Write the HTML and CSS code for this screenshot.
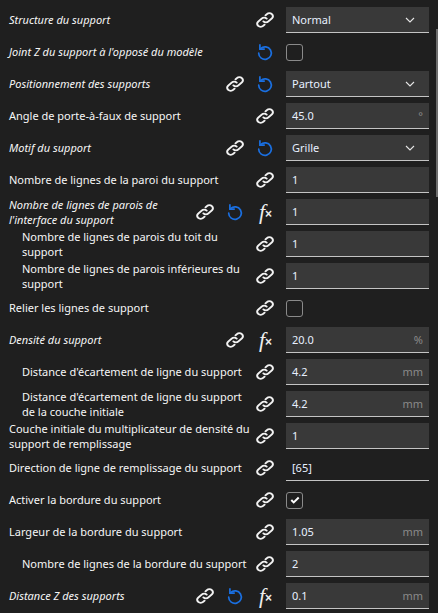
FILE: index.html
```html
<!DOCTYPE html>
<html lang="fr">
<head>
<meta charset="utf-8">
<title>Support</title>
<link rel="stylesheet" href="styles.css">
</head>
<body>
<svg class="defs" width="0" height="0" aria-hidden="true">
  <symbol id="link" viewBox="0 0 18 18">
    <g transform="translate(-1.4 0) scale(1.16 1)" fill="none" stroke="currentColor" stroke-width="1.75" stroke-linecap="round">
      <path d="M7.6 10.4a3 3 0 0 0 4.3 0l3-3a3 3 0 0 0-4.3-4.3L9.4 4.3"/>
      <path d="M10.4 7.6a3 3 0 0 0-4.3 0l-3 3a3 3 0 0 0 4.3 4.3l1.2-1.2"/>
    </g>
  </symbol>
  <symbol id="reset" viewBox="0 0 18 18">
    <path d="M4.6 5.6A6.3 6.3 0 1 1 2.7 10.2" fill="none" stroke="currentColor" stroke-width="1.7" stroke-linecap="round"/>
    <path d="M3.9 1.2v4.9h4.9" fill="none" stroke="currentColor" stroke-width="1.7" stroke-linejoin="miter"/>
  </symbol>
  <symbol id="chev" viewBox="0 0 10 6">
    <path d="M1 1l4 4 4-4" fill="none" stroke="currentColor" stroke-width="1.1"/>
  </symbol>
</svg>
<main class="list">
  <div class="row"><span class="label em">Structure du support</span><span class="icons"><svg class="ic"><use href="#link"/></svg></span><div class="field"><span>Normal</span><svg class="chev"><use href="#chev"/></svg></div></div>
  <div class="row"><span class="label em">Joint Z du support à l'opposé du modèle</span><span class="icons"><svg class="ic blue"><use href="#reset"/></svg></span><div class="check"></div></div>
  <div class="row"><span class="label em">Positionnement des supports</span><span class="icons"><svg class="ic"><use href="#link"/></svg><svg class="ic blue"><use href="#reset"/></svg></span><div class="field"><span>Partout</span><svg class="chev"><use href="#chev"/></svg></div></div>
  <div class="row"><span class="label">Angle de porte-à-faux de support</span><span class="icons"><svg class="ic"><use href="#link"/></svg></span><div class="field"><span>45.0</span><span class="unit">°</span></div></div>
  <div class="row"><span class="label em">Motif du support</span><span class="icons"><svg class="ic"><use href="#link"/></svg><svg class="ic blue"><use href="#reset"/></svg></span><div class="field"><span>Grille</span><svg class="chev"><use href="#chev"/></svg></div></div>
  <div class="row"><span class="label">Nombre de lignes de la paroi du support</span><span class="icons"><svg class="ic"><use href="#link"/></svg></span><div class="field"><span>1</span></div></div>
  <div class="row"><span class="label em two">Nombre de lignes de parois de l'interface du support</span><span class="icons"><svg class="ic"><use href="#link"/></svg><svg class="ic blue"><use href="#reset"/></svg><span class="fx"><i>f</i><b>×</b></span></span><div class="field"><span>1</span></div></div>
  <div class="row sub"><span class="label two">Nombre de lignes de parois du toit du support</span><span class="icons"><svg class="ic"><use href="#link"/></svg></span><div class="field"><span>1</span></div></div>
  <div class="row sub"><span class="label two">Nombre de lignes de parois inférieures du support</span><span class="icons"><svg class="ic"><use href="#link"/></svg></span><div class="field"><span>1</span></div></div>
  <div class="row"><span class="label">Relier les lignes de support</span><span class="icons"><svg class="ic"><use href="#link"/></svg></span><div class="check"></div></div>
  <div class="row"><span class="label em">Densité du support</span><span class="icons"><svg class="ic"><use href="#link"/></svg><span class="fx"><i>f</i><b>×</b></span></span><div class="field"><span>20.0</span><span class="unit">%</span></div></div>
  <div class="row sub"><span class="label">Distance d'écartement de ligne du support</span><span class="icons"><svg class="ic"><use href="#link"/></svg></span><div class="field"><span>4.2</span><span class="unit">mm</span></div></div>
  <div class="row sub"><span class="label two">Distance d'écartement de ligne du support de la couche initiale</span><span class="icons"><svg class="ic"><use href="#link"/></svg></span><div class="field"><span>4.2</span><span class="unit">mm</span></div></div>
  <div class="row"><span class="label two">Couche initiale du multiplicateur de densité du support de remplissage</span><span class="icons"><svg class="ic"><use href="#link"/></svg></span><div class="field"><span>1</span></div></div>
  <div class="row"><span class="label">Direction de ligne de remplissage du support</span><span class="icons"><svg class="ic"><use href="#link"/></svg></span><div class="field plain"><span>[65]</span></div></div>
  <div class="row"><span class="label">Activer la bordure du support</span><span class="icons"><svg class="ic"><use href="#link"/></svg></span><div class="check on"><svg class="tick" viewBox="0 0 10 8"><path d="M1.3 4l2.4 2.4L8.7 1.5" fill="none" stroke="currentColor" stroke-width="2"/></svg></div></div>
  <div class="row"><span class="label">Largeur de la bordure du support</span><span class="icons"><svg class="ic"><use href="#link"/></svg></span><div class="field"><span>1.05</span><span class="unit">mm</span></div></div>
  <div class="row sub"><span class="label">Nombre de lignes de la bordure du support</span><span class="icons"><svg class="ic"><use href="#link"/></svg></span><div class="field"><span>2</span></div></div>
  <div class="row"><span class="label em">Distance Z des supports</span><span class="icons"><svg class="ic"><use href="#link"/></svg><svg class="ic blue"><use href="#reset"/></svg><span class="fx"><i>f</i><b>×</b></span></span><div class="field"><span>0.1</span><span class="unit">mm</span></div></div>
</main>
<div class="scroll"></div>
</body>
</html>
```
FILE: styles.css
```css
* { box-sizing: border-box; }
html, body { margin: 0; height: 613px; overflow: hidden; background: #1f1f1f; }
body { position: relative; font: 11px/15px "Noto Sans", "Open Sans", sans-serif; color: #f6f6f6; }
.defs { position: absolute; }
.list { padding: 4px 9px 0 9px; }
.row { display: flex; align-items: center; height: 32px; }
.sub .label { padding-left: 13px; }
.label { flex: 1 1 0; min-width: 0; padding: 0 4px 2px 0; }
.label.two { padding-bottom: 0; }
.label.em { font-style: italic; }
.icons { display: flex; align-items: center; gap: 12px; margin-right: 12px; flex: none; }
.ic { width: 18px; height: 18px; color: #f2f2f2; flex: none; }
.ic.blue { color: #1a6fe0; }
.fx { width: 18px; height: 18px; position: relative; flex: none; color: #eee; font: italic 22px/18px "Liberation Serif", serif; }
.fx i { position: absolute; left: 3px; top: 0; }
.fx b { position: absolute; left: 9px; top: 3px; font: 900 12px/16px "Liberation Sans", sans-serif; }
.field { width: 143px; height: 26px; flex: none; display: flex; align-items: center; justify-content: space-between; padding: 0 6px; background: #393939; border-bottom: 1px solid #c4c4c4; color: #e8f0ff; }
.field.plain { background: transparent; }
.unit { color: #8a8a8a; }
.chev { width: 10px; height: 6px; margin-right: 8px; color: #e6e6e6; }
.check { width: 17px; height: 17px; margin-right: 126px; flex: none; border: 1px solid #8a8a8a; border-radius: 3px; display: flex; align-items: center; justify-content: center; }
.tick { width: 10px; height: 8px; color: #fff; }
.scroll { position: absolute; right: 0; top: 29px; width: 2px; height: 168px; background: #6e6e6e; }
```
